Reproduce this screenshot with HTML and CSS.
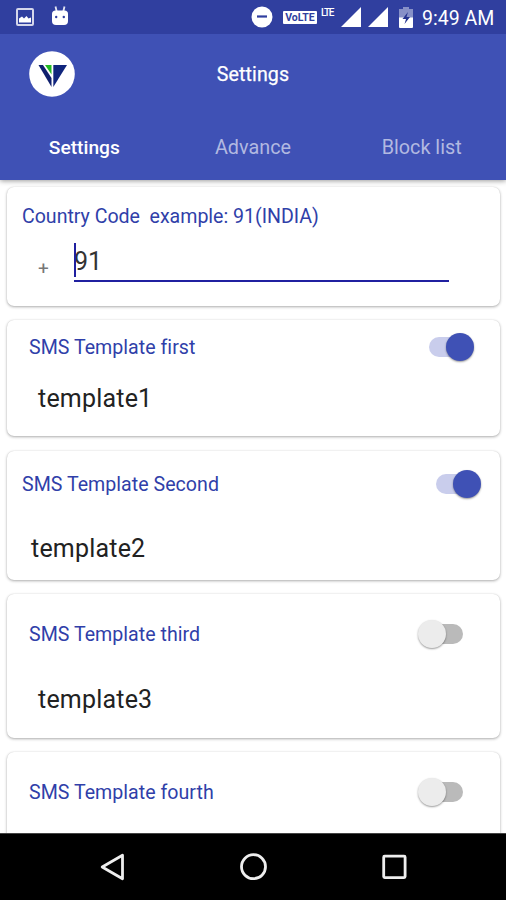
FILE: index.html
```html
<!DOCTYPE html>
<html lang="en">
<head>
<meta charset="utf-8">
<title>Settings</title>
<link rel="stylesheet" href="styles.css">
</head>
<body>
<div class="screen">
  <header class="header">
    <div class="status">
      <svg class="icon-image" width="18" height="18" viewBox="0 0 18 18"><rect x="1" y="1" width="16" height="16" rx="1" fill="none" stroke="#d5d7eb" stroke-width="2"/><path d="M3 14.500V10.500l3-2 2 2 2.500-2.500 2 2.500L15 9.500v5z" fill="#fff"/></svg>
      <svg class="icon-robot" width="18" height="20" viewBox="0 0 18 20"><path d="M4.500 0.500l1.200 5M13.500 0.500l-1.200 5" stroke="#e4e6f3" stroke-width="1.800"/><path d="M1 8q0-3.500 3.500-3.500h9q3.500 0 3.500 3.500v7q0 4-4 4h-8q-4 0-4-4z" fill="#fff"/><circle cx="5.200" cy="11" r="1.200" fill="#303f9f"/><circle cx="12.800" cy="11" r="1.200" fill="#303f9f"/></svg>
      <svg class="icon-dnd" width="22" height="22" viewBox="0 0 22 22"><circle cx="11" cy="11" r="10.500" fill="#fff"/><path d="M6 10.500h10" stroke="#303f9f" stroke-width="2.200"/></svg>
      <span class="volte">VoLTE</span>
      <span class="lte">LTE</span>
      <svg class="icon-signal" width="20" height="20" viewBox="0 0 20 20"><path d="M0 20L20 0v20z" fill="#fff"/></svg>
      <svg class="icon-signal" width="20" height="20" viewBox="0 0 20 20"><path d="M0 20L20 0v20z" fill="#fff"/></svg>
      <svg class="icon-battery" width="16" height="21" viewBox="0 0 16 21"><path d="M5 0h6v2h4v9H1V2h4z" fill="#8790c7"/><path d="M1 10.500h14V20q0 1-1 1H2q-1 0-1-1z" fill="#fff"/><path d="M10 5L4.500 12H8l-1.500 5 5.500-7H8.500z" fill="#25338f"/></svg>
      <span class="clock">9:49 AM</span>
    </div>
    <div class="toolbar">
      <svg class="logo" width="46" height="46" viewBox="0 0 46 46"><circle cx="23" cy="23" r="22.800" fill="#fff"/><path d="M9.500 14h4.500L22.500 27v9z" fill="#10206e"/><path d="M16 14H22.500v9.500z" fill="#22bb22"/><path d="M24.300 14H38L24.300 36z" fill="#10257d"/></svg>
      <h1 class="title">Settings</h1>
    </div>
    <nav class="tabs">
      <span class="tab tab-active">Settings</span>
      <span class="tab">Advance</span>
      <span class="tab">Block list</span>
    </nav>
  </header>
  <main class="content">
    <section class="card card-country">
      <h2 class="label label-country">Country Code&nbsp; example: 91(INDIA)</h2>
      <div class="field">
        <span class="plus">+</span>
        <div class="input"><i class="caret"></i>91</div>
      </div>
    </section>
    <section class="card card-first">
      <div class="row"><h2 class="label">SMS Template first</h2><span class="switch switch-on"></span></div>
      <p class="value">template1</p>
    </section>
    <section class="card card-second">
      <div class="row"><h2 class="label">SMS Template Second</h2><span class="switch switch-on"></span></div>
      <p class="value">template2</p>
    </section>
    <section class="card card-third">
      <div class="row"><h2 class="label">SMS Template third</h2><span class="switch"></span></div>
      <p class="value">template3</p>
    </section>
    <section class="card card-fourth">
      <div class="row"><h2 class="label">SMS Template fourth</h2><span class="switch"></span></div>
    </section>
  </main>
  <footer class="navbar">
    <svg width="28" height="30" viewBox="0 0 28 30"><path d="M4.200 15L24.500 3.200v23.600z" fill="none" stroke="#eee" stroke-width="2.800" stroke-linejoin="round"/></svg>
    <svg width="28" height="30" viewBox="0 0 28 30"><circle cx="14.500" cy="14.700" r="12" fill="none" stroke="#eee" stroke-width="2.800"/></svg>
    <svg width="28" height="30" viewBox="0 0 28 30"><rect x="3.700" y="4.200" width="21.400" height="21.400" rx="1" fill="none" stroke="#eee" stroke-width="2.800"/></svg>
  </footer>
</div>
</body>
</html>
```

FILE: styles.css
```css
* { box-sizing: border-box; }
body { margin: 0; font-family: Roboto, sans-serif; background: #fff; }
h1, h2, p { margin: 0; font-weight: 400; }
svg { display: block; flex: none; }
.screen { width: 506px; height: 900px; display: flex; flex-direction: column; overflow: hidden; }
.header { height: 180px; flex: none; background: #3f51b5; box-shadow: 0 1px 5px rgba(0,0,0,.4); position: relative; z-index: 1; }
.status { height: 34px; background: #303f9f; color: #fff; display: flex; align-items: center; padding: 0 10px 0 16px; }
.icon-robot { margin: -2px 0 0 17px; }
.icon-dnd { margin-left: auto; }
.volte { width: 34px; height: 13px; margin: 0 0 0 10px; background: #fff; color: #303f9f; border-radius: 1px; font: 700 10.5px/13px Roboto, sans-serif; text-align: center; }
.lte { width: 13px; margin: -9px 0 0 4px; font: 500 10px/12px Roboto, sans-serif; letter-spacing: -1.3px; }
.icon-signal { margin-left: 7px; }
.icon-battery { margin-left: 10px; }
.clock { width: 74px; margin: 3px 0 0 8px; font-size: 19.5px; line-height: 24px; white-space: nowrap; }
.toolbar { height: 80px; display: grid; grid-template-columns: 1fr auto 1fr; align-items: center; padding: 0 29px; }
.title { color: #fff; font-size: 19.6px; line-height: 24px; letter-spacing: .1px; font-weight: 400; padding-top: 1px; -webkit-text-stroke: .25px #fff; }
.tabs { display: grid; grid-template-columns: repeat(3, 1fr); height: 67px; align-items: center; text-align: center; }
.tab { color: #b2b9e1; font-size: 19.8px; line-height: 24px; padding-top: 1px; }
.tab-active { color: #fff; font-size: 19.2px; font-weight: 500; padding-top: 0; }
.content { flex: 1; min-height: 0; padding: 7px 6px 0 7px; display: flex; flex-direction: column; overflow: hidden; background: #fff; }
.card { flex: none; background: #fff; border-radius: 7px; box-shadow: 0 1px 3px rgba(0,0,0,.32), 0 0 1px rgba(0,0,0,.14); padding: 0 26px 0 22px; }
.card-country { height: 119px; padding: 17px 15px 0; }
.card-first { height: 116px; margin-top: 14px; padding-top: 10px; }
.card-second { height: 129px; margin-top: 15px; padding: 16px 19px 0 15px; }
.card-third { height: 144px; margin-top: 14px; padding-top: 23px; padding-right: 37px; }
.card-fourth { height: 144px; margin-top: 14px; padding-top: 23px; padding-right: 37px; }
.label { color: #303fa9; font-size: 19.6px; line-height: 24px; letter-spacing: .02px; white-space: nowrap; padding-top: 3px; }
.label-country { letter-spacing: -.03px; height: 24px; padding-top: 1px; }
.field { display: flex; align-items: flex-end; padding-left: 16px; margin-top: 10px; }
.plus { width: 36px; font-size: 19px; line-height: 26px; color: #777; }
.input { width: 375px; height: 44px; border-bottom: 2px solid #2020a0; color: #333; font-size: 25px; line-height: 48px; position: relative; }
.caret { position: absolute; left: 0; top: 5px; width: 2px; height: 34px; background: #2020a0; }
.row { display: flex; justify-content: space-between; height: 33px; align-items: center; }
.switch { width: 45px; height: 28px; position: relative; }
.switch::before { content: ""; position: absolute; left: 12px; top: 4px; width: 33px; height: 20px; border-radius: 10px; background: #bababa; }
.switch::after { content: ""; position: absolute; left: 0; top: 0; width: 28px; height: 28px; border-radius: 50%; background: #ececec; box-shadow: 0 1px 2px rgba(0,0,0,.4); }
.switch-on::before { left: 0; background: #c9cdec; }
.switch-on::after { left: 17px; background: #3f51b5; }
.value { color: #222; font-size: 25px; line-height: 30px; padding-left: 9px; margin-top: 21px; letter-spacing: .2px; }
.card-second .value { margin-top: 34px; }
.card-third .value { margin-top: 35px; }
.navbar { height: 67px; flex: none; background: #000; display: flex; justify-content: space-between; align-items: center; padding: 0 98px; border-top: 1px solid #444; }
```
